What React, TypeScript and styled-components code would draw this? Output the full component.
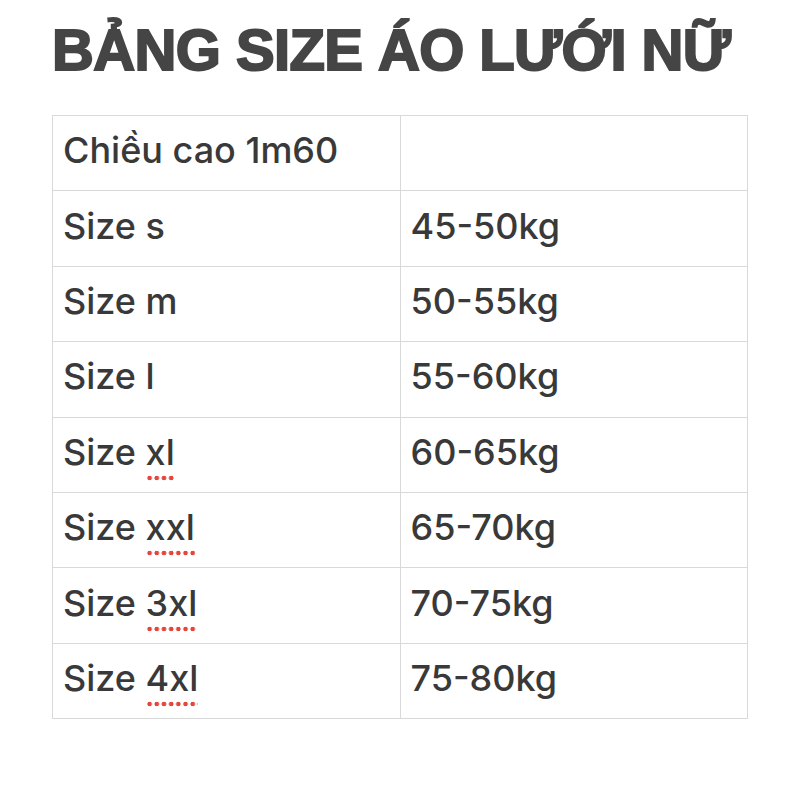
import React from 'react';
import styled, { createGlobalStyle } from 'styled-components';

const GlobalStyle = createGlobalStyle`
  html, body {
    margin: 0;
    padding: 0;
    background: #ffffff;
  }
`;

const rows: { label: string; flag?: string; weight: string }[] = [
  { label: 'Size s', weight: '45-50kg' },
  { label: 'Size m', weight: '50-55kg' },
  { label: 'Size l', weight: '55-60kg' },
  { label: 'Size ', flag: 'xl', weight: '60-65kg' },
  { label: 'Size ', flag: 'xxl', weight: '65-70kg' },
  { label: 'Size ', flag: '3xl', weight: '70-75kg' },
  { label: 'Size ', flag: '4xl', weight: '75-80kg' },
];

const Page = () => {
  return (
    <Wrapper>
      <GlobalStyle />
      <Title>BẢNG SIZE ÁO LƯỚI NỮ</Title>
      <SizeTable>
        <tbody>
          <tr>
            <Cell>Chiều cao 1m60</Cell>
            <Cell />
          </tr>
          {rows.map((r, i) => (
            <tr key={i}>
              <Cell>
                {r.label}
                {r.flag ? <Misspelled>{r.flag}</Misspelled> : null}
              </Cell>
              <Cell>{r.weight}</Cell>
            </tr>
          ))}
        </tbody>
      </SizeTable>
    </Wrapper>
  );
};

const Wrapper = styled.div`
  width: 800px;
  height: 800px;
  box-sizing: border-box;
  padding: 16px 0 0 52px;
  background: #fff;
`;

const Title = styled.h1`
  margin: 0;
  font-family: "Liberation Sans", Arial, sans-serif;
  font-weight: 700;
  font-size: 58px;
  line-height: 68px;
  color: #454545;
  -webkit-text-stroke: 2px #454545;
  letter-spacing: -0.6px;
  white-space: nowrap;
`;

const SizeTable = styled.table`
  margin-top: 31px;
  border-collapse: collapse;
  width: 696px;
  table-layout: fixed;
`;

const Cell = styled.td`
  width: 50%;
  height: 75.4px;
  padding: 0 0 6px 10px;
  box-sizing: border-box;
  border: 1px solid #d9d9d9;
  font-family: Inter, "Noto Sans", sans-serif;
  font-weight: 500;
  font-size: 36px;
  color: #393939;
  vertical-align: middle;
  white-space: nowrap;
`;

const Misspelled = styled.span`
  padding-bottom: 7px;
  background-image: radial-gradient(circle, #e4463d 2px, transparent 2.6px);
  background-size: 7.2px 6px;
  background-repeat: repeat-x;
  background-position: 0 100%;
`;

export default Page;
